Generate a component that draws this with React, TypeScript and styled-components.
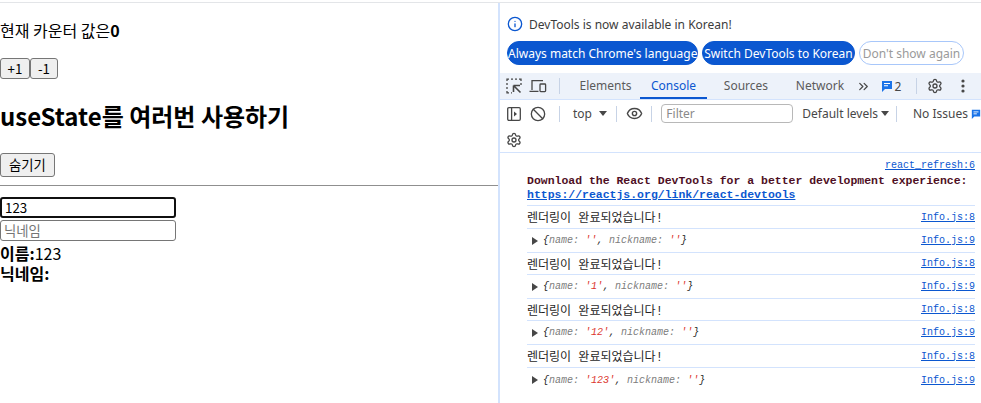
import { createGlobalStyle } from 'styled-components';
import styled from 'styled-components';
import { ChevronsRight, Settings, Eye, Ban, Info } from 'lucide-react';

const GlobalStyle = createGlobalStyle`
  html, body {
    margin: 0;
    padding: 0;
    height: 100%;
    background: #fff;
    overflow: hidden;
  }
`;

const uiFont = `"Noto Sans", "Noto Sans CJK KR", sans-serif`;
const pageFont = `"Noto Sans CJK KR", sans-serif`;
const monoFont = `"Liberation Mono", "Noto Sans CJK KR", monospace`;

const Shell = styled.div`
  display: flex;
  height: 403px;
  width: 981px;
  margin-top: 2px;
  border-top: 1px solid #e3e5e8;
  overflow: hidden;
`;

const PagePane = styled.div`
  width: 498px;
  flex: none;
  font-family: ${pageFont};
  font-size: 16px;
  color: #000;
`;

const Counter = styled.p`
  margin: 16px 0 17px;
  line-height: 22px;
`;

const PageButton = styled.button`
  display: inline-block;
  box-sizing: border-box;
  height: ${p => p.$tall ? 24 : 21}px;
  width: ${p => p.$w}px;
  padding: 0;
  margin: 0;
  font-family: ${pageFont};
  font-size: 13.33px;
  line-height: 1;
  color: #000;
  background: #efefef;
  border: 1px solid #767676;
  border-radius: 3px;
`;

const ButtonRow = styled.div`
  display: flex;
`;

const Heading = styled.h2`
  margin: 21px 0 19px;
  font-size: 24px;
  line-height: 32px;
  font-weight: 700;
`;

const Rule = styled.hr`
  margin: 8px 0 11px;
  border: none;
  border-top: 1px solid #8f8f8f;
  height: 0;
`;

const Fields = styled.div`
  display: flex;
  flex-direction: column;
  gap: 2px;
  margin-bottom: 2px;
`;

const TextInput = styled.input`
  box-sizing: border-box;
  width: 176px;
  height: 21px;
  padding: 0 3px;
  font-family: ${pageFont};
  font-size: 13.33px;
  color: #000;
  background: #fff;
  border: ${p => p.$focused ? '2px solid #101010' : '1px solid #767676'};
  border-radius: 3px;
  outline: none;
  &::placeholder {
    color: #757575;
  }
`;

const InfoLine = styled.div`
  line-height: 20px;
  height: 20px;
  b {
    font-weight: 700;
  }
`;

const DevPane = styled.div`
  flex: 1;
  min-width: 0;
  border-left: 2px solid #d3e3fd;
  font-family: ${uiFont};
  font-size: 12px;
  color: #474747;
`;

const InfoBar = styled.div`
  box-sizing: border-box;
  height: 70px;
  padding: 12px 0 0 7px;
`;

const InfoMessage = styled.div`
  display: flex;
  align-items: center;
  gap: 6px;
  height: 18px;
  color: #3c3c3c;
`;

const PillRow = styled.div`
  display: flex;
  gap: 4px;
  margin-top: 8px;
`;

const Pill = styled.button`
  box-sizing: border-box;
  height: 24px;
  width: ${p => p.$w}px;
  padding: 0;
  font-family: ${uiFont};
  font-size: 12px;
  white-space: nowrap;
  border-radius: 12px;
  color: ${p => p.$ghost ? '#9a9a9a' : '#fff'};
  background: ${p => p.$ghost ? '#fff' : '#0b57d0'};
  border: 1px solid ${p => p.$ghost ? '#a8c7fa' : '#0b57d0'};
`;

const TabBar = styled.div`
  display: flex;
  align-items: center;
  box-sizing: border-box;
  height: 27px;
  background: #edf2fa;
  border-bottom: 1px solid #d3e3fd;
`;

const IconSlot = styled.span`
  display: flex;
  align-items: center;
  justify-content: center;
  flex: none;
  width: ${p => p.$w ?? 24}px;
  color: #474747;
`;

const Divider = styled.span`
  flex: none;
  width: 1px;
  height: 16px;
  margin: 0 ${p => p.$m ?? 6}px;
  background: #c7d3e6;
`;

const Tab = styled.span`
  box-sizing: border-box;
  display: flex;
  align-items: center;
  justify-content: center;
  flex: none;
  height: 26px;
  width: ${p => p.$w}px;
  color: ${p => p.$active ? '#0b57d0' : '#5b5b5b'};
  border-bottom: 2px solid ${p => p.$active ? '#0b57d0' : 'transparent'};
`;

const Count = styled.span`
  margin-left: 2px;
  color: #474747;
`;

const Toolbar = styled.div`
  display: flex;
  align-items: center;
  height: 27px;
`;

const SecondRow = styled.div`
  display: flex;
  align-items: center;
  box-sizing: border-box;
  height: 26px;
  border-bottom: 1px solid #d3e3fd;
`;

const ContextSelect = styled.span`
  display: flex;
  align-items: center;
  gap: 7px;
  width: 42px;
  margin-left: 2px;
`;

const Caret = styled.span`
  flex: none;
  width: 0;
  height: 0;
  border-left: 4px solid transparent;
  border-right: 4px solid transparent;
  border-top: 5px solid #474747;
`;

const FilterBox = styled.span`
  box-sizing: border-box;
  display: flex;
  align-items: center;
  flex: none;
  width: 132px;
  height: 19px;
  margin-left: 2px;
  padding-left: 4px;
  color: #8a8a8a;
  border: 1px solid #b8b8b8;
  border-radius: 4px;
`;

const Levels = styled.span`
  display: flex;
  align-items: center;
  gap: 3px;
  flex: none;
  margin-left: 9px;
`;

const Logs = styled.div`
  margin-left: 27px;
  margin-right: 6px;
  font-family: ${monoFont};
  font-size: 12px;
  color: #1f1f1f;
`;

const Banner = styled.div`
  box-sizing: border-box;
  height: 53px;
  padding-top: 6px;
  border-bottom: 1px solid #d3e3fd;
  line-height: 14.5px;
`;

const BannerText = styled.div`
  font-size: 11.47px;
  font-weight: 700;
  color: #4e0f24;
  white-space: nowrap;
`;

const BannerLink = styled(BannerText)`
  color: #0b57d0;
  text-decoration: underline;
`;

const SourceLink = styled.a`
  display: block;
  font-size: 10px;
  text-align: right;
  color: #0b57d0;
  text-decoration: underline;
  flex: none;
`;

const LogRow = styled.div`
  box-sizing: border-box;
  display: flex;
  align-items: center;
  justify-content: space-between;
  height: ${p => p.$h}px;
  border-bottom: ${p => p.$last ? 'none' : '1px solid #d3e3fd'};
`;

const ObjectLine = styled.span`
  display: flex;
  align-items: center;
  gap: 5px;
  margin-left: 5px;
  font-size: 10px;
  font-style: italic;
  color: #1f1f1f;
  white-space: pre;
`;

const Expand = styled.span`
  flex: none;
  width: 0;
  height: 0;
  border-top: 4px solid transparent;
  border-bottom: 4px solid transparent;
  border-left: 6px solid #474747;
`;

const Key = styled.span`
  color: #7c7c7c;
`;

const Str = styled.span`
  color: #dc362e;
`;

const Prompt = styled.div`
  margin: 11px 0 0 11px;
  color: #0b57d0;
`;

const MessageIcon = ({ size = 12 }: { size?: number }) => (
  <svg width={size} height={size} viewBox="0 0 12 12">
    <path d="M1 1h10v8H4l-3 3z" fill="#1a73e8" />
    <path d="M3 3.5h6M3 5.8h4" stroke="#fff" strokeWidth="1.1" />
  </svg>
);

const InspectIcon = () => (
  <svg width="16" height="16" viewBox="0 0 16 16" fill="none" stroke="#474747" strokeWidth="1.3">
    <path d="M1 3V1.2h2M5 1.2h2M9 1.2h2M13 1.2h2V3M15 5v2M1 5v2M1 9v2M1 13v1.8h2M5 14.8h1" strokeDasharray="none" />
    <path d="M7.5 7.5h6.5M7.5 7.5V14M7.5 7.5l7 7" strokeWidth="1.6" />
  </svg>
);

const DeviceIcon = () => (
  <svg width="18" height="14" viewBox="0 0 18 14" fill="none" stroke="#474747" strokeWidth="1.3">
    <path d="M3 11V1.6h11M0.5 12.4h9" />
    <rect x="11" y="5" width="5.6" height="7.6" rx="0.8" />
  </svg>
);

const SidebarIcon = () => (
  <svg width="14" height="14" viewBox="0 0 14 14" fill="none" stroke="#474747" strokeWidth="1.3">
    <rect x="0.7" y="0.7" width="12.6" height="12.6" rx="1.2" />
    <path d="M4.6 0.7v12.6" />
    <path d="M7 4.5 10 7l-3 2.5z" fill="#474747" stroke="none" />
  </svg>
);

const KebabIcon = () => (
  <svg width="4" height="14" viewBox="0 0 4 14" fill="#474747">
    <circle cx="2" cy="2" r="1.6" />
    <circle cx="2" cy="7" r="1.6" />
    <circle cx="2" cy="12" r="1.6" />
  </svg>
);

const logs = [
  { text: '렌더링이 완료되었습니다!', src: 'Info.js:8', h: 23 },
  { name: '', src: 'Info.js:9', h: 24 },
  { text: '렌더링이 완료되었습니다!', src: 'Info.js:8', h: 22 },
  { name: '1', src: 'Info.js:9', h: 24 },
  { text: '렌더링이 완료되었습니다!', src: 'Info.js:8', h: 22 },
  { name: '12', src: 'Info.js:9', h: 24 },
  { text: '렌더링이 완료되었습니다!', src: 'Info.js:8', h: 23 },
  { name: '123', src: 'Info.js:9', h: 24, last: true },
];

export default function App() {
  return (
    <>
      <GlobalStyle />
      <Shell>
        <PagePane>
          <Counter>현재 카운터 값은<b>0</b></Counter>
          <ButtonRow>
            <PageButton $w={30}>+1</PageButton>
            <PageButton $w={28}>-1</PageButton>
          </ButtonRow>
          <Heading>useState를 여러번 사용하기</Heading>
          <PageButton $w={55} $tall>숨기기</PageButton>
          <Rule />
          <Fields>
            <TextInput $focused defaultValue="123" />
            <TextInput placeholder="닉네임" />
          </Fields>
          <InfoLine><b>이름:</b>123</InfoLine>
          <InfoLine><b>닉네임:</b></InfoLine>
        </PagePane>

        <DevPane>
          <InfoBar>
            <InfoMessage>
              <Info size={16} color="#0b57d0" />
              DevTools is now available in Korean!
            </InfoMessage>
            <PillRow>
              <Pill $w={191}>Always match Chrome's language</Pill>
              <Pill $w={153}>Switch DevTools to Korean</Pill>
              <Pill $w={105} $ghost>Don't show again</Pill>
            </PillRow>
          </InfoBar>

          <TabBar>
            <IconSlot $w={28}><InspectIcon /></IconSlot>
            <IconSlot $w={20}><DeviceIcon /></IconSlot>
            <Divider $m={11} />
            <Tab $w={69}>Elements</Tab>
            <Tab $w={67} $active>Console</Tab>
            <Tab $w={78}>Sources</Tab>
            <Tab $w={70}>Network</Tab>
            <IconSlot $w={16}><ChevronsRight size={15} /></IconSlot>
            <IconSlot $w={40}>
              <MessageIcon />
              <Count>2</Count>
            </IconSlot>
            <Divider $m={5} />
            <IconSlot $w={26}><Settings size={16} strokeWidth={2} /></IconSlot>
            <IconSlot $w={30}><KebabIcon /></IconSlot>
          </TabBar>

          <Toolbar>
            <IconSlot $w={28}><SidebarIcon /></IconSlot>
            <IconSlot $w={20}><Ban size={16} /></IconSlot>
            <Divider $m={11} />
            <ContextSelect>top<Caret /></ContextSelect>
            <Divider $m={7} />
            <IconSlot $w={20}><Eye size={17} /></IconSlot>
            <Divider $m={7} />
            <FilterBox>Filter</FilterBox>
            <Levels>Default levels<Caret /></Levels>
            <Divider $m={7} />
            <Levels>No Issues <MessageIcon size={10} /></Levels>
          </Toolbar>

          <SecondRow>
            <IconSlot $w={28}><Settings size={16} strokeWidth={2} /></IconSlot>
          </SecondRow>

          <Logs>
            <Banner>
              <SourceLink>react_refresh:6</SourceLink>
              <BannerText>Download the React DevTools for a better development experience:</BannerText>
              <BannerLink>https://reactjs.org/link/react-devtools</BannerLink>
            </Banner>
            {logs.map((log, i) => (
              <LogRow key={i} $h={log.h} $last={log.last}>
                {log.text !== undefined ? (
                  <span>{log.text}</span>
                ) : (
                  <ObjectLine>
                    <Expand />
                    <span>
                      {'{'}<Key>name: </Key><Str>'{log.name}'</Str>, <Key>nickname: </Key><Str>''</Str>{'}'}
                    </span>
                  </ObjectLine>
                )}
                <SourceLink>{log.src}</SourceLink>
              </LogRow>
            ))}
            <Prompt><svg width="8" height="8" viewBox="0 0 8 8" fill="none" stroke="#0b57d0" strokeWidth="1.4"><path d="M1 1l3 3-3 3" /></svg></Prompt>
          </Logs>
        </DevPane>
      </Shell>
    </>
  );
}
